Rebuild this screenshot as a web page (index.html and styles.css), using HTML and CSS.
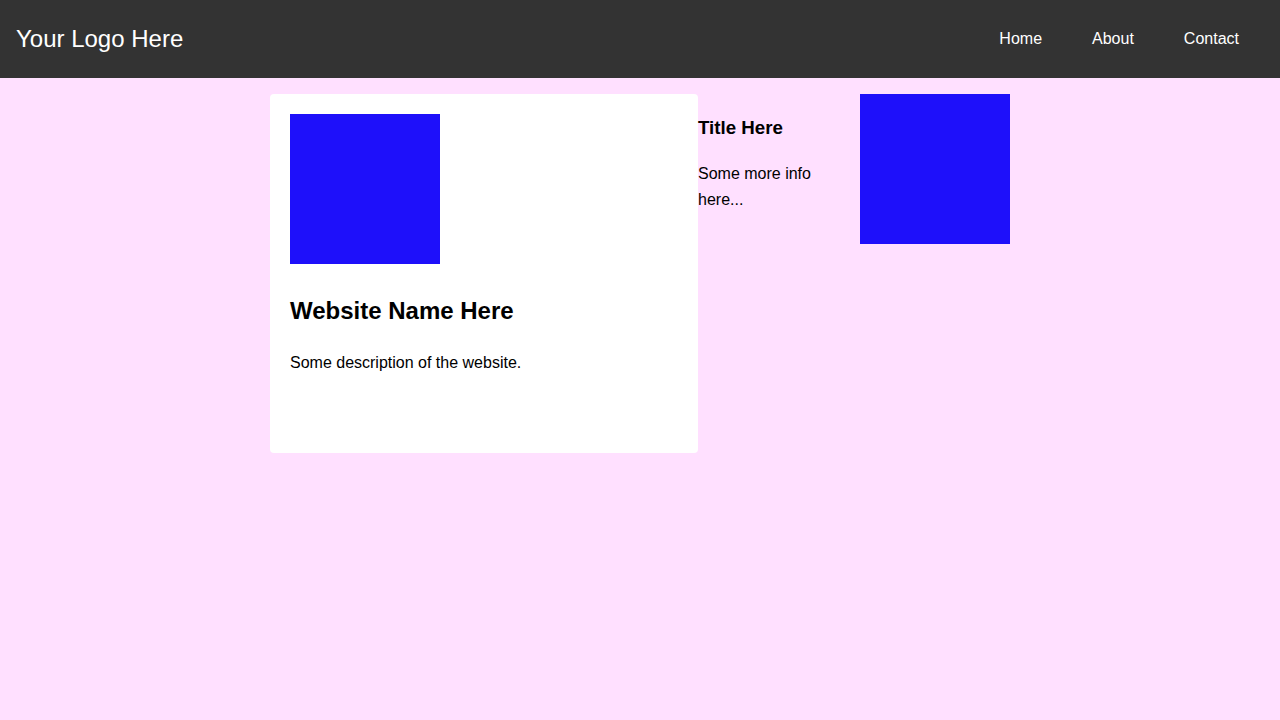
FILE: index.html
```html
<!DOCTYPE html>
<html lang="en">
<head>
<meta charset="utf-8">
<title>Your Logo Here</title>
<link rel="stylesheet" href="styles.css">
</head>
<body>
<header class="site-header">
  <div class="logo">Your Logo Here</div>
  <nav class="nav">
    <a href="#" class="nav-link">Home</a>
    <a href="#" class="nav-link">About</a>
    <a href="#" class="nav-link">Contact</a>
  </nav>
</header>
<main class="content">
  <div class="card">
    <div class="thumb-wrap"><span class="thumb"></span></div>
    <h2 class="card-title">Website Name Here</h2>
    <p class="card-text">Some description of the website.</p>
  </div>
  <div class="info">
    <h3 class="info-title">Title Here</h3>
    <p class="info-text">Some more info here...</p>
  </div>
  <div class="square"></div>
</main>
</body>
</html>
```
FILE: styles.css
```css
* { box-sizing: border-box; }
html, body {
  margin: 0;
  padding: 0;
}
body {
  background: #ffe0ff;
  font-family: "Liberation Sans", Arial, sans-serif;
  line-height: 1.6;
  color: #000;
  min-height: 720px;
}
.site-header {
  background: #333333;
  height: 78px;
  display: flex;
  align-items: center;
  justify-content: space-between;
  padding: 0 16px;
  color: #fff;
}
.logo {
  font-size: 24px;
  line-height: 1.15;
}
.nav {
  display: flex;
}
.nav-link {
  color: #fff;
  text-decoration: none;
  font-size: 16px;
  padding: 0 25px;
}
.content {
  display: flex;
  justify-content: center;
  align-items: flex-start;
  padding-top: 16px;
}
.card {
  background: #fff;
  width: 428px;
  height: 359px;
  padding: 20px;
  border-radius: 4px;
}
.thumb-wrap {
  font-size: 16px;
}
.thumb {
  display: inline-block;
  width: 150px;
  height: 150px;
  background: #1e10fa;
  vertical-align: baseline;
}
.card-title {
  font-size: 24px;
  margin: 0.83em 0;
}
.card-text {
  margin: 16px 0;
  font-size: 16px;
}
.info {
  width: 162px;
  padding-right: 12px;
}
.info-title {
  font-size: 18.72px;
  margin: 18.72px 0;
}
.info-text {
  margin: 0;
  font-size: 16px;
}
.square {
  width: 150px;
  height: 150px;
  background: #1e10fa;
}
```
